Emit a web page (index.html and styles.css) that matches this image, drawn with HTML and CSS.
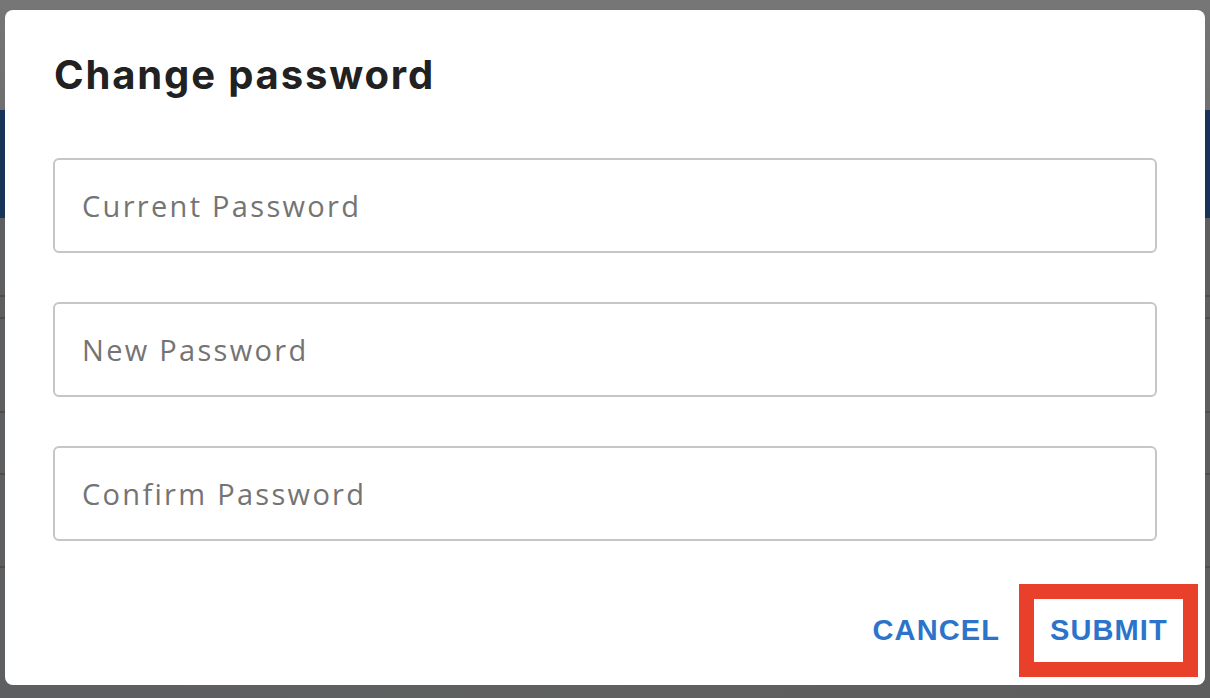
FILE: index.html
```html
<!DOCTYPE html>
<html lang="en">
<head>
<meta charset="utf-8">
<title>Change password</title>
<link rel="stylesheet" href="styles.css">
</head>
<body>
<div class="page">
  <div class="page-top"></div>
  <div class="page-band"></div>
  <div class="page-list">
    <div class="row r1"></div>
    <div class="row r2"></div>
    <div class="row r3"></div>
    <div class="row r4"></div>
    <div class="row r5"></div>
  </div>
</div>
<div class="dialog" role="dialog" aria-labelledby="dlg-title">
  <h2 id="dlg-title" class="dialog-title">Change password</h2>
  <form class="dialog-form">
    <input class="field" type="password" placeholder="Current Password">
    <input class="field" type="password" placeholder="New Password">
    <input class="field" type="password" placeholder="Confirm Password">
  </form>
  <div class="dialog-actions">
    <button class="btn" type="button">CANCEL</button>
    <span class="highlight"><button class="btn" type="button">SUBMIT</button></span>
  </div>
</div>
</body>
</html>
```

FILE: styles.css
```css
html, body {
  margin: 0;
  padding: 0;
  width: 1210px;
  height: 698px;
  overflow: hidden;
}
body {
  position: relative;
  font-family: "Open Sans", "Liberation Sans", sans-serif;
  background: #5f5f5f;
}
.page {
  display: flex;
  flex-direction: column;
  height: 698px;
}
.page-top {
  height: 110px;
  background: linear-gradient(180deg, #767676 0%, #6f6f6f 100%);
}
.page-band {
  height: 108px;
  background: #17335a;
}
.page-list {
  flex: 1;
  background: linear-gradient(90deg, #5d5f61 0%, #606060 50%, #5e5e5e 100%);
  display: flex;
  flex-direction: column;
}
.row { border-bottom: 2px solid #4e4e4e; }
.r1 { height: 77px; }
.r2 { height: 20px; }
.r3 { height: 92px; }
.r4 { height: 60px; }
.r5 { height: 91px; }

.dialog {
  position: absolute;
  left: 5px;
  top: 10px;
  width: 1200px;
  height: 675px;
  background: #ffffff;
  border-radius: 8px;
  box-sizing: border-box;
  padding: 38px 48px 0 48px;
  display: flex;
  flex-direction: column;
}
.dialog-title {
  margin: 0;
  font-family: "Inter", "Liberation Sans", sans-serif;
  font-weight: 700;
  font-size: 40px;
  line-height: 54px;
  letter-spacing: 1.85px;
  color: #212121;
  padding-left: 1px;
}
.dialog-form {
  margin-top: 56px;
  display: flex;
  flex-direction: column;
  gap: 49px;
}
.field {
  width: 1104px;
  height: 95px;
  box-sizing: border-box;
  border: 2px solid #c6c6c6;
  border-radius: 6px;
  padding: 0 0 0 27px;
  font-family: "Open Sans", "Liberation Sans", sans-serif;
  font-size: 29px;
  color: #333;
  background: #fff;
  outline: none;
  margin: 0;
}
.field::placeholder {
  color: #747474;
  letter-spacing: 2.3px;
}
.dialog-actions {
  margin-top: 43px;
  display: flex;
  justify-content: flex-end;
  align-items: center;
  gap: 19px;
  margin-right: -41px;
}
.btn {
  border: none;
  background: transparent;
  font-family: "Liberation Sans", Arial, sans-serif;
  font-weight: 700;
  font-size: 29px;
  color: #2c74c9;
  padding: 0;
  cursor: pointer;
  letter-spacing: 1.1px;
}
.highlight {
  display: inline-flex;
  align-items: center;
  justify-content: flex-start;
  padding-left: 16px;
  width: 179px;
  height: 93px;
  box-sizing: border-box;
  border: 15px solid #e8402a;
}
```
